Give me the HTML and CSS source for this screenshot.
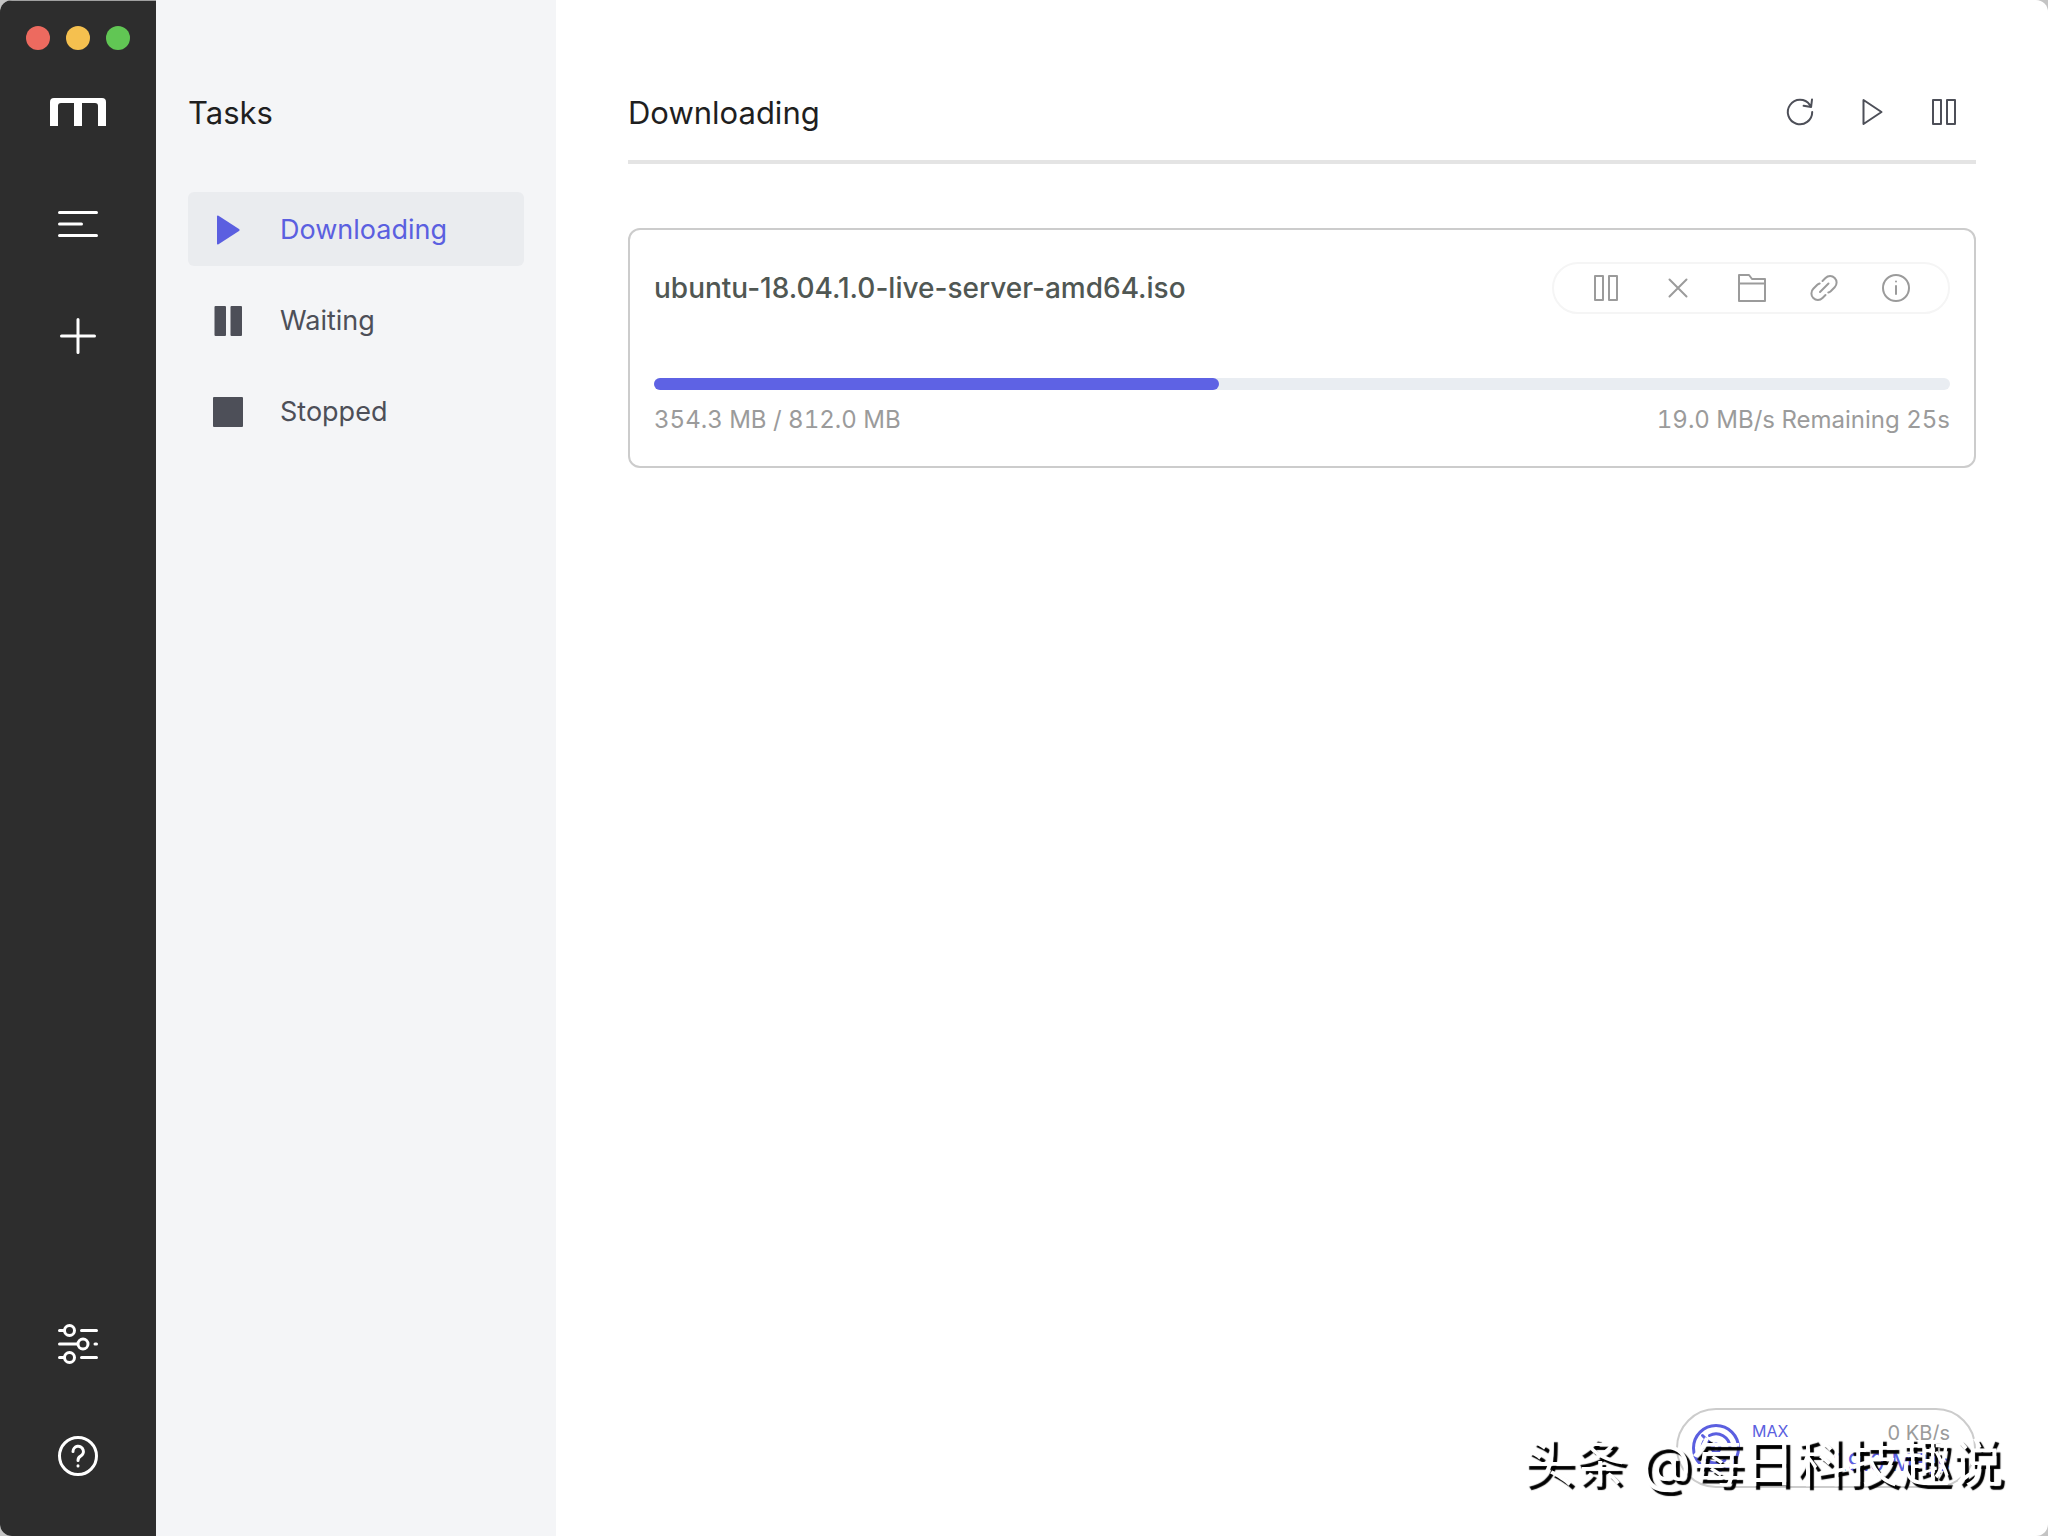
FILE: index.html
```html
<!DOCTYPE html>
<html lang="en">
<head>
    <meta charset="UTF-8">
    <title>Downloading</title>
    <link rel="stylesheet" href="styles.css">
</head>
<body>
    <div class="app">
        <aside class="aside">
            <div class="window-buttons">
                <button class="dot dot-close" aria-label="Close"></button>
                <button class="dot dot-minimize" aria-label="Minimize"></button>
                <button class="dot dot-zoom" aria-label="Zoom"></button>
            </div>

            <div class="aside-menu">
                <a class="logo" href="#" aria-label="Home">
                    <svg width="56" height="28" viewBox="0 0 56 28">
                        <path d="M0 28V4a4 4 0 0 1 4-4h48a4 4 0 0 1 4 4v24h-8V8a3 3 0 0 0-3-3H32v23h-8V5H11a3 3 0 0 0-3 3v20z" fill="currentColor"/>
                    </svg>
                </a>
                <button class="aside-button" aria-label="Tasks">
                    <svg width="48" height="48" viewBox="0 0 48 48">
                        <path d="M5.500 12.500h37M5.500 24h22M5.500 35.500h37"/>
                    </svg>
                </button>
                <button class="aside-button" aria-label="Add task">
                    <svg width="48" height="48" viewBox="0 0 48 48">
                        <path d="M24 7.500v33M7.500 24h33"/>
                    </svg>
                </button>
            </div>

            <div class="aside-menu">
                <button class="aside-button" aria-label="Preferences">
                    <svg width="48" height="48" viewBox="0 0 48 48">
                        <path d="M5.500 10.500h5M27.500 10.500h15M5.500 24h18M41 24h1.500M5.500 37.500h5M27.500 37.500h15"/>
                        <circle cx="15.500" cy="10.500" r="5"/>
                        <circle cx="29" cy="24" r="5"/>
                        <circle cx="15.500" cy="37.500" r="5"/>
                    </svg>
                </button>
                <button class="aside-button" aria-label="Help">
                    <svg width="48" height="48" viewBox="0 0 48 48">
                        <circle cx="24" cy="24" r="18.500"/>
                        <path d="M19 19.500a5.200 5.200 0 1 1 7.600 4.600c-1.800 1-2.600 1.800-2.600 4.400M24 33.800v.1"/>
                    </svg>
                </button>
            </div>
        </aside>

        <nav class="subnav">
            <h2>Tasks</h2>
            <ul>
                <li>
                    <a class="subnav-link active" href="#">
                        <svg width="32" height="32" viewBox="0 0 32 32"><path d="M5 2.500v27a1 1 0 0 0 1.500.8L27 17a1.200 1.200 0 0 0 0-2L6.500 1.700A1 1 0 0 0 5 2.500z" fill="currentColor"/></svg>
                        <span>Downloading</span>
                    </a>
                </li>
                <li>
                    <a class="subnav-link" href="#">
                        <svg width="32" height="32" viewBox="0 0 32 32" fill="currentColor"><rect x="2.500" y="1" width="11.500" height="30" rx="1"/><rect x="18.500" y="1" width="11.500" height="30" rx="1"/></svg>
                        <span>Waiting</span>
                    </a>
                </li>
                <li>
                    <a class="subnav-link" href="#">
                        <svg width="32" height="32" viewBox="0 0 32 32" fill="currentColor"><rect x="1" y="1" width="30" height="30" rx="1"/></svg>
                        <span>Stopped</span>
                    </a>
                </li>
            </ul>
        </nav>

        <main class="main">
            <header class="panel-header">
                <h1>Downloading</h1>
                <div class="task-actions">
                    <button aria-label="Refresh">
                        <svg width="32" height="32" viewBox="0 0 32 32"><path d="M28.200 15A12.200 12.200 0 1 1 25.800 7.800M28 2.500l-.9 7.500-7.500-1.200"/></svg>
                    </button>
                    <button aria-label="Resume all">
                        <svg width="32" height="32" viewBox="0 0 32 32"><path d="M7.500 3v24L25.500 15z"/></svg>
                    </button>
                    <button aria-label="Pause all">
                        <svg width="32" height="32" viewBox="0 0 32 32"><path d="M5 3h8v24H5zM19 3h8v24h-8z"/></svg>
                    </button>
                </div>
            </header>

            <article class="task-item">
                <div class="task-head">
                    <h3>ubuntu-18.04.1.0-live-server-amd64.iso</h3>
                    <div class="task-item-actions">
                        <button aria-label="Pause">
                            <svg width="32" height="32" viewBox="0 0 32 32"><path d="M4 4h8v24H4zM18 4h8v24h-8z"/></svg>
                        </button>
                        <button aria-label="Delete">
                            <svg width="32" height="32" viewBox="0 0 32 32"><path d="M6.500 7.500l17 17M23.500 7.500l-17 17"/></svg>
                        </button>
                        <button aria-label="Show in folder">
                            <svg width="32" height="32" viewBox="0 0 32 32"><path d="M4 3h10l3 4h13v22H4zM4 11.500h26"/></svg>
                        </button>
                        <button aria-label="Copy link">
                            <svg width="32" height="32" viewBox="0 0 32 32"><path d="M13 20l8.500-8.500M15.500 9l3-3a6.500 6.500 0 0 1 9.200 9.200l-4 4c-.8.700-1.500 1.100-2.400 1.300M18.500 23l-3 3a6.500 6.500 0 0 1-9.200-9.200l4-4c.8-.7 1.500-1.100 2.400-1.300"/></svg>
                        </button>
                        <button aria-label="Details">
                            <svg width="32" height="32" viewBox="0 0 32 32"><circle cx="17" cy="16" r="13"/><path d="M17 14v8M17 9.500v.1"/></svg>
                        </button>
                    </div>
                </div>
                <div class="progress" role="progressbar" aria-label="Download progress" aria-valuenow="44" aria-valuemin="0" aria-valuemax="100">
                    <div class="progress-inner" style="width: 43.63%"></div>
                </div>
                <div class="task-info">
                    <span>354.3 MB / 812.0 MB</span>
                    <span>19.0 MB/s Remaining 25s</span>
                </div>
            </article>
        </main>

        <div class="speedometer">
            <svg width="48" height="48" viewBox="0 0 48 48">
                <circle cx="24" cy="24" r="22.500"/>
                <path d="M17.500 11.500a14 14 0 0 1 20.500 12M10 24a14 14 0 0 1 2-7M10.500 11.500l11 11M15 36a14 14 0 0 0 18 0"/>
                <circle cx="24" cy="24" r="4"/>
            </svg>
            <span class="mode">MAX</span>
            <div class="speeds">
                <span class="upload">0 KB/s</span>
                <span class="download">19.0 MB/s</span>
            </div>
        </div>

        <div class="watermark" lang="zh">头条 @每日科技趣说</div>
    </div>
</body>
</html>
```
FILE: styles.css
```css
* {
    box-sizing: border-box;
}
html {
    background-color: #c4c4c4;
}
body {
    margin: 0;
    font-family: Inter, "Noto Sans CJK SC", sans-serif;
    color: #1f1f1f;
}
h1, h2, h3, ul {
    margin: 0;
    padding: 0;
    font-weight: 400;
    list-style: none;
}
button {
    padding: 0;
    border: none;
    background: none;
    color: inherit;
}
svg {
    display: block;
    flex: none;
}
.app {
    position: relative;
    display: flex;
    min-height: 100vh;
    border-radius: 12px;
    overflow: hidden;
    background-color: #fff;
}

/* Dark bar */
.aside {
    display: flex;
    flex-direction: column;
    flex: none;
    width: 156px;
    padding: 25px 0 56px;
    background-color: #2d2d2d;
    border-top: 1px solid #a0a0a0;
    color: #fff;
}
.window-buttons {
    display: flex;
    justify-content: center;
    gap: 16px;
    margin-bottom: 38px;
}
.dot {
    width: 24px;
    height: 24px;
    border-radius: 50%;
}
.dot-close {
    background-color: #ed6a5f;
}
.dot-minimize {
    background-color: #f5c04f;
}
.dot-zoom {
    background-color: #61c654;
}
.aside-menu {
    display: flex;
    flex-direction: column;
    align-items: center;
    gap: 64px;
}
.aside-menu:last-child {
    margin-top: auto;
}
.logo {
    display: flex;
    align-items: center;
    height: 48px;
    color: #fff;
}
.aside-button svg {
    fill: none;
    stroke: currentColor;
    stroke-width: 3;
    stroke-linecap: round;
}

/* Task lists */
.subnav {
    flex: none;
    width: 400px;
    padding: 88px 32px 0;
    background-color: #f4f5f7;
}
.subnav h2, .panel-header h1 {
    font-size: 31px;
    line-height: 50px;
}
.subnav ul {
    display: flex;
    flex-direction: column;
    gap: 17px;
    margin-top: 54px;
}
.subnav-link {
    display: flex;
    align-items: center;
    gap: 36px;
    height: 74px;
    padding: 2px 24px 0;
    border-radius: 6px;
    font-size: 27px;
    line-height: 36px;
    color: #4d4f58;
    text-decoration: none;
}
.subnav-link.active {
    background-color: #eaecef;
    color: #5b5fe0;
}

/* Main panel */
.main {
    flex: 1;
    padding: 88px 72px 0;
}
.panel-header {
    display: flex;
    justify-content: space-between;
    align-items: center;
    padding-bottom: 22px;
    border-bottom: 4px solid #e4e4e4;
}
.task-actions {
    display: flex;
    gap: 8px;
    color: #4d4f58;
}
.task-actions button {
    display: flex;
    justify-content: center;
    width: 64px;
}
.task-actions svg, .task-item-actions svg {
    fill: none;
    stroke: currentColor;
    stroke-width: 2;
    stroke-linecap: round;
    stroke-linejoin: round;
}
.task-item {
    margin-top: 64px;
    padding: 32px 24px 30px;
    border: 2px solid #ccc;
    border-radius: 12px;
}
.task-head {
    display: flex;
    justify-content: space-between;
    align-items: center;
}
.task-head h3 {
    font-size: 28px;
    font-weight: 500;
    color: #505753;
}
.task-item-actions {
    display: flex;
    align-items: center;
    height: 52px;
    padding: 0 17px;
    border: 2px solid #f5f5f5;
    border-radius: 26px;
    color: #9b9b9b;
}
.task-item-actions button {
    display: flex;
    justify-content: center;
    width: 72px;
}
.progress {
    height: 12px;
    margin-top: 64px;
    border-radius: 6px;
    background-color: #e9edf2;
}
.progress-inner {
    height: 12px;
    border-radius: 6px;
    background-color: #5e62e4;
}
.task-info {
    display: flex;
    justify-content: space-between;
    margin-top: 14px;
    font-size: 24px;
    font-variant-numeric: tabular-nums;
    line-height: 32px;
    color: #9b9b9b;
}

/* Speed badge */
.speedometer {
    position: absolute;
    right: 72px;
    bottom: 48px;
    display: flex;
    gap: 12px;
    width: 300px;
    height: 80px;
    padding: 14px 24px 0 14px;
    border: 2px solid #ccc;
    border-radius: 40px;
    background-color: #fff;
    color: #5b5fe0;
}
.speedometer svg {
    fill: none;
    stroke: currentColor;
    stroke-width: 3;
    stroke-linecap: round;
}
.mode {
    font-size: 16px;
    line-height: 14px;
}
.speeds {
    display: flex;
    flex-direction: column;
    align-items: flex-end;
    margin-left: auto;
}
.upload {
    font-size: 20px;
    line-height: 18px;
    color: #9b9b9b;
}
.download {
    font-size: 24px;
    font-variant-numeric: tabular-nums;
    line-height: 42px;
}
.watermark {
    position: absolute;
    right: 45px;
    bottom: 36px;
    font-size: 52px;
    line-height: 72px;
    color: #fff;
    text-shadow: 4px 4px 1px #000;
    white-space: nowrap;
}
```
